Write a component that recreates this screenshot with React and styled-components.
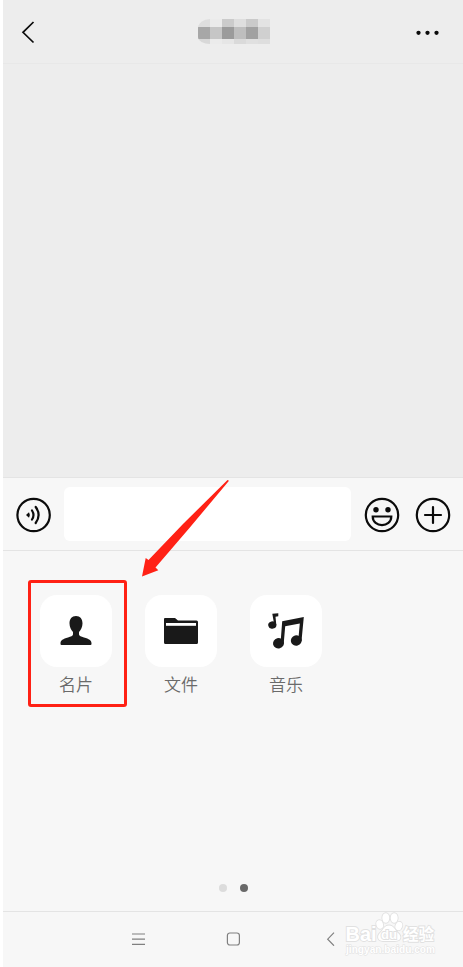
import React from 'react';
import styled, { createGlobalStyle } from 'styled-components';

const $ink = '#0b0b0b';
const $line = '#e4e4e4';
const $bar = '#f7f7f7';
const $chat = '#ededed';
const $red = '#ff2115';

const GlobalStyle = createGlobalStyle`
  * { box-sizing: border-box; }
  body {
    margin: 0;
    background: #fff;
    font-family: 'Noto Sans CJK SC', 'Noto Sans', sans-serif;
  }
  svg { display: block; }
`;

const Screen = styled.div`
  position: relative;
  display: flex;
  flex-direction: column;
  width: 463px;
  height: 967px;
  padding-left: 3px;
  overflow: hidden;
`;

const Header = styled.header`
  display: grid;
  grid-template-columns: 70px 1fr 70px;
  align-items: center;
  height: 64px;
  background: ${$chat};
  border-bottom: 1px solid #e8e8e8;
`;

const BackIcon = styled.svg`
  margin-left: 17px;
`;

const MoreIcon = styled.svg`
  margin: 2px 0 0 23px;
`;

const Mosaic = styled.div`
  display: grid;
  grid-template-columns: repeat(6, 12px);
  grid-template-rows: 8px 12px 5px;
  justify-self: center;
  margin-left: 2px;
  border-radius: 12px 0 0 12px / 9px 0 0 7px;
  overflow: hidden;
`;

const Cell = styled.i`
  background: ${props => props.$tone};
`;

const Messages = styled.main`
  height: 413px;
  background: ${$chat};
`;

const InputBar = styled.div`
  display: flex;
  align-items: center;
  height: 74px;
  padding: 1px 12px 0 13px;
  background: ${$bar};
  border-top: 1px solid ${$line};
  border-bottom: 1px solid ${$line};
`;

const Field = styled.div`
  width: 288px;
  height: 54px;
  margin: 0 13px 2px 12px;
  background: #fff;
  border-radius: 6px;
`;

const RoundIcon = styled.svg`
  width: 36px;
  height: 36px;
  flex: none;
  margin-right: ${props => props.$gap || 0}px;
  fill: none;
  stroke: ${$ink};
  stroke-width: 2.2;
  stroke-linecap: round;
`;

const Panel = styled.section`
  display: flex;
  flex-direction: column;
  justify-content: space-between;
  height: 360px;
  padding: 29px 0 19px 25px;
  background: ${$bar};
`;

const Tools = styled.div`
  display: flex;
  gap: 6px;
`;

const Tool = styled.div`
  display: flex;
  flex-direction: column;
  align-items: center;
  width: 99px;
  height: 127px;
  padding-top: ${props => (props.$marked ? 12 : 15)}px;
  padding-right: ${props => (props.$marked ? 0 : 3)}px;
  border: ${props => (props.$marked ? `3px solid ${$red}` : 'none')};
  border-radius: 3px;
`;

const Tile = styled.div`
  display: flex;
  align-items: center;
  justify-content: center;
  width: 72px;
  height: 72px;
  margin-right: ${props => (props.$marked ? 3 : 0)}px;
  background: #fff;
  border-radius: 17px;
`;

const Label = styled.span`
  margin: 5px ${props => (props.$marked ? 3 : 0)}px 0 0;
  font-size: 17px;
  font-weight: 350;
  line-height: 24px;
  color: #6a6a6a;
`;

const Pager = styled.div`
  display: flex;
  justify-content: center;
  gap: 12.5px;
  padding-right: 24px;
`;

const Dot = styled.i`
  width: 8px;
  height: 8px;
  border-radius: 50%;
  background: ${props => (props.$active ? '#696969' : '#dcdcdc')};
`;

const NavBar = styled.footer`
  display: flex;
  align-items: center;
  height: 56px;
  padding: 0 0 1px 128px;
  background: ${$bar};
  border-top: 1px solid ${$line};
`;

const NavIcon = styled.svg`
  width: 14px;
  height: 14px;
  margin-right: ${props => props.$gap || 0}px;
  fill: none;
  stroke: #808080;
  stroke-width: 1.2;
`;

const Arrow = styled.svg`
  position: absolute;
  left: 136px;
  top: 474px;
`;

const Watermark = styled.svg`
  position: absolute;
  left: 340px;
  top: 908px;
  fill: #fff;
  stroke: #e1e1e1;
  stroke-width: 1.8;
  paint-order: stroke;
  & text {
    font-family: 'Liberation Sans', 'Noto Sans CJK SC', sans-serif;
    font-weight: bold;
  }
`;

const tones = [
  '#dedede', '#ebebeb', '#cbcbcb', '#dedede', '#cacaca', '#e3e3e3',
  '#a7a7a7', '#c6c6c6', '#9b9b9b', '#bebebe', '#a1a1a1', '#d0d0d0',
  '#d8d8d8', '#ebebeb', '#e6e6e6', '#dadada', '#e0e0e0', '#dedede',
];

const PersonIcon = () => (
  <svg width="34" height="32" viewBox="0 0 34 32" fill="#191919">
    <path d="M17 1C12.800 1 10.400 4 10.500 8.500C10.600 12 12 15 14 17V19.500C13.700 21 12 21.500 9 22.500C4 24 1.500 25 1.500 28.500V29Q1.500 30 2.500 30H31.500Q32.500 30 32.500 29V28.500C32.500 25 30 24 25 22.500C22 21.500 20.300 21 20 19.500V17C22 15 23.400 12 23.500 8.500C23.600 4 21.200 1 17 1Z" />
  </svg>
);

const FolderIcon = () => (
  <svg width="36" height="28" viewBox="0 0 36 28">
    <path d="M2 1H12L15 3.500H33.500Q35 3.500 35 5V25.500Q35 27 33.500 27H2.500Q1 27 1 25.500V2Q1 1 2 1Z" fill="#191919" />
    <path d="M3 6H33V8.800H3Z" fill="#fff" />
  </svg>
);

const MusicIcon = () => (
  <svg width="38" height="38" viewBox="0 0 38 38" fill="#191919">
    <ellipse cx="5.300" cy="13" rx="4.100" ry="3.700" transform="rotate(-15 5.300 13)" />
    <path d="M5.300 1.800L11.300 1.300V4.300L8.500 4.800L9.300 13H7.300Z" />
    <ellipse cx="11.500" cy="31.300" rx="5.500" ry="5.200" transform="rotate(-15 11.500 31.300)" />
    <ellipse cx="29.300" cy="28.500" rx="5.500" ry="5.200" transform="rotate(-15 29.300 28.500)" />
    <path d="M15.200 9.200L36.800 5L34.500 29H31.200L32.800 11.600L18.200 14.300L16.700 31.500H13.500Z" />
  </svg>
);

const tools = [
  { name: '名片', icon: PersonIcon, marked: true },
  { name: '文件', icon: FolderIcon },
  { name: '音乐', icon: MusicIcon },
];

function App() {
  return (
    <Screen>
      <GlobalStyle />
      <Header>
        <BackIcon width="18" height="24" viewBox="0 0 18 24" fill="none" stroke={$ink} strokeWidth="1.7">
          <path d="M13.500 2L3 12.300L13.500 22.500" />
        </BackIcon>
        <Mosaic>
          {tones.map((tone, idx) => <Cell key={`cell_${idx + 1}`} $tone={tone} />)}
        </Mosaic>
        <MoreIcon width="24" height="6" viewBox="0 0 24 6" fill={$ink}>
          <circle cx="2.500" cy="2.800" r="2.150" />
          <circle cx="11.500" cy="2.800" r="2.150" />
          <circle cx="20.500" cy="2.800" r="2.150" />
        </MoreIcon>
      </Header>
      <Messages />
      <InputBar>
        <RoundIcon viewBox="0 0 36 36">
          <circle cx="17.600" cy="18" r="16.200" />
          <path d="M10 18L13 15.200Q14.800 18 13 20.800Z" fill={$ink} stroke="none" />
          <path d="M16 13.500Q19 18 16 22.500M19.700 10Q25.500 18 19.700 26" />
        </RoundIcon>
        <Field />
        <RoundIcon viewBox="0 0 36 36" $gap={15}>
          <circle cx="18" cy="18" r="16.200" />
          <circle cx="12" cy="12.800" r="2.700" fill={$ink} stroke="none" />
          <circle cx="24" cy="12.800" r="2.700" fill={$ink} stroke="none" />
          <path d="M8.700 19.500H27.300C27.300 31 8.700 31 8.700 19.500Z" />
        </RoundIcon>
        <RoundIcon viewBox="0 0 36 36">
          <circle cx="18" cy="18" r="16.200" />
          <path d="M10 18H26M18 10V26" />
        </RoundIcon>
      </InputBar>
      <Panel>
        <Tools>
          {tools.map(({ name, icon: Icon, marked }) => (
            <Tool key={name} $marked={marked}>
              <Tile $marked={marked}><Icon /></Tile>
              <Label $marked={marked}>{name}</Label>
            </Tool>
          ))}
        </Tools>
        <Pager>
          <Dot />
          <Dot $active />
        </Pager>
      </Panel>
      <NavBar>
        <NavIcon viewBox="0 0 14 14" $gap={81}>
          <path d="M1 2H14M1 7.200H14M1 12.400H14" />
        </NavIcon>
        <NavIcon viewBox="0 0 14 14" $gap={83}>
          <rect x="1.400" y="1" width="12" height="12" rx="2.500" />
        </NavIcon>
        <NavIcon viewBox="0 0 14 14">
          <path d="M11 0.700L4.700 7.200L11 13.700" />
        </NavIcon>
      </NavBar>
      <Arrow width="98" height="106" viewBox="0 0 98 106" fill={$red}>
        <path d="M91.500 6L93 6.800L53 54.500L19.500 93.500L22.300 96.300L6 102.500L9.700 84L12.500 86L47 50Z" />
      </Arrow>
      <Watermark width="120" height="56" viewBox="0 0 120 56">
        <text x="5.500" y="32.500" fontSize="21" textLength="31" lengthAdjust="spacingAndGlyphs">Bai</text>
        <ellipse cx="39.700" cy="16.500" rx="3.300" ry="4.300" transform="rotate(-15 39.700 16.500)" />
        <ellipse cx="45.800" cy="10" rx="3.500" ry="4.800" />
        <ellipse cx="54.200" cy="10" rx="3.500" ry="4.800" />
        <ellipse cx="58.800" cy="18" rx="3.300" ry="4.300" transform="rotate(20 58.800 18)" />
        <path d="M49 17.500C44 17.500 43 22.500 40 25C36.500 28.500 38 33 43 33H55C61 33 62 28.500 58 25C55 22.500 54 17.500 49 17.500Z" />
        <text x="41" y="31" fontSize="13" textLength="16" lengthAdjust="spacingAndGlyphs">du</text>
        <text x="63" y="31.500" fontSize="15.500">经验</text>
        <text x="6" y="45" fontSize="10" textLength="89" lengthAdjust="spacingAndGlyphs" strokeWidth="1">jingyan.baidu.com</text>
      </Watermark>
    </Screen>
  );
}

export default App;
